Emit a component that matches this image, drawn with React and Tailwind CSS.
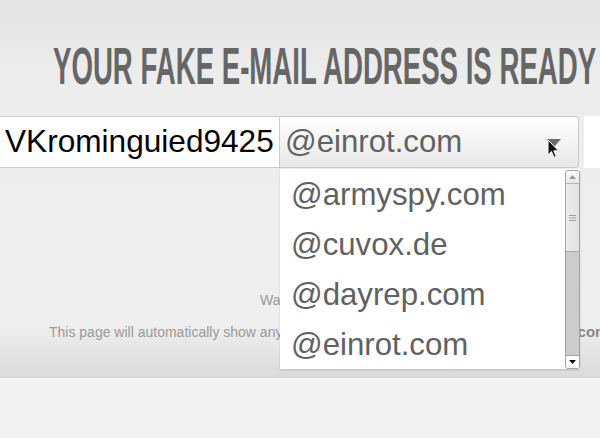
import React from 'react';

const domains = ['@armyspy.com', '@cuvox.de', '@dayrep.com', '@einrot.com'];

const Scrollbar = () => (
  <div className="w-[15px] flex flex-col border border-[#a3a3a3] rounded-[3px] bg-[#cdcdcd] overflow-hidden">
    {/* up button */}
    <div className="h-[13px] flex items-center justify-center bg-linear-to-b from-[#fbfbfb] to-[#e9e9e9] border-b border-[#b5b5b5]">
      <svg width="7" height="4" viewBox="0 0 7 4">
        <polygon points="0,4 3.5,0 7,4" fill="#9a9a9a" />
      </svg>
    </div>
    {/* thumb */}
    <div className="h-[68px] flex items-center justify-center bg-linear-to-r from-[#ececec] to-[#e2e2e2] border-b border-[#a8a8a8]">
      <svg width="7" height="6" viewBox="0 0 7 6">
        <rect x="0" y="0" width="7" height="1" fill="#a0a0a0" />
        <rect x="0" y="2.5" width="7" height="1" fill="#a0a0a0" />
        <rect x="0" y="5" width="7" height="1" fill="#a0a0a0" />
      </svg>
    </div>
    {/* trough */}
    <div className="flex-1 bg-[#cccccc]" />
    {/* down button */}
    <div className="h-[13px] flex items-center justify-center bg-white border-t border-[#a8a8a8]">
      <svg width="7" height="4" viewBox="0 0 7 4">
        <polygon points="0,0 7,0 3.5,4" fill="#111" />
      </svg>
    </div>
  </div>
);

const App = () => {
  return (
    <div className="w-[600px] h-[438px] overflow-hidden flex flex-col font-['Liberation_Sans',Arial,sans-serif]">
      <main className="h-[378px] shrink-0 bg-[linear-gradient(180deg,#e4e4e4_0%,#ededed_22%,#efefef_86%,#dadada_100%)]">
        {/* Heading */}
        <div className="pt-[40px] pl-[53px] whitespace-nowrap">
          <h1 className="inline-block origin-left scale-x-[0.531] text-[52px] leading-[52px] font-bold text-[#666]">
            YOUR FAKE E-MAIL ADDRESS IS READY
          </h1>
        </div>

        {/* Address row */}
        <div className="mt-[24px] h-[52px] flex">
          <div className="w-[280px] shrink-0 bg-white border-y border-r border-[#cccccc] flex items-center pl-[5px] text-[31.6px] text-black">
            VKrominguied9425
          </div>
          <div className="relative w-[299px] shrink-0 h-[52px] border border-l-0 border-[#cccccc] rounded-r-[4px] bg-linear-to-b from-white to-[#e8e8e8] flex items-center pl-[5px] text-[31.2px] text-[#616161]">
            @einrot.com
            <svg className="absolute left-[267px] top-[22px]" width="14" height="8" viewBox="0 0 14 8">
              <polygon points="0,0 14,0 7,8" fill="#6b6b6b" />
            </svg>
            {/* mouse cursor */}
            <svg className="absolute left-[267px] top-[22px]" width="13" height="20" viewBox="0 0 13 20">
              <path
                d="M1 1 L1 16 L4.5 12.5 L7 18.5 L9.2 17.6 L6.8 11.8 L11.5 11.8 Z"
                fill="#111"
                stroke="#fff"
                strokeWidth="1"
                strokeLinejoin="round"
              />
            </svg>
            {/* open list */}
            <div className="absolute left-0 top-[52px] w-[300px] h-[200px] bg-white flex shadow-[0_1px_2px_rgba(0,0,0,0.15)]">
              <ul className="flex-1 pt-[1px]">
                {domains.map((d) => (
                  <li key={d} className="h-[50px] flex items-center pl-[11px] text-[31.2px] text-[#616161]">
                    {d}
                  </li>
                ))}
              </ul>
              <div className="pt-[1px] flex">
                <Scrollbar />
              </div>
            </div>
          </div>
          <div className="ml-[5px] flex-1 bg-white" />
        </div>

        {/* Status text */}
        <p className="mt-[122px] pl-[260px] text-[14px] leading-[20px] text-[#999] whitespace-nowrap">
          Waiting for e-mails...
        </p>
        <p className="mt-[12px] pl-[49px] text-[14px] leading-[20px] text-[#999] whitespace-nowrap">
          This page will automatically show any e-mails sent to{' '}
          <span className="font-bold text-[15px] text-[#888]">VKrominguied9425@einrot.com</span>
        </p>
      </main>
      <footer className="flex-1 bg-[#f3f3f3]" />
    </div>
  );
};

export default App;
